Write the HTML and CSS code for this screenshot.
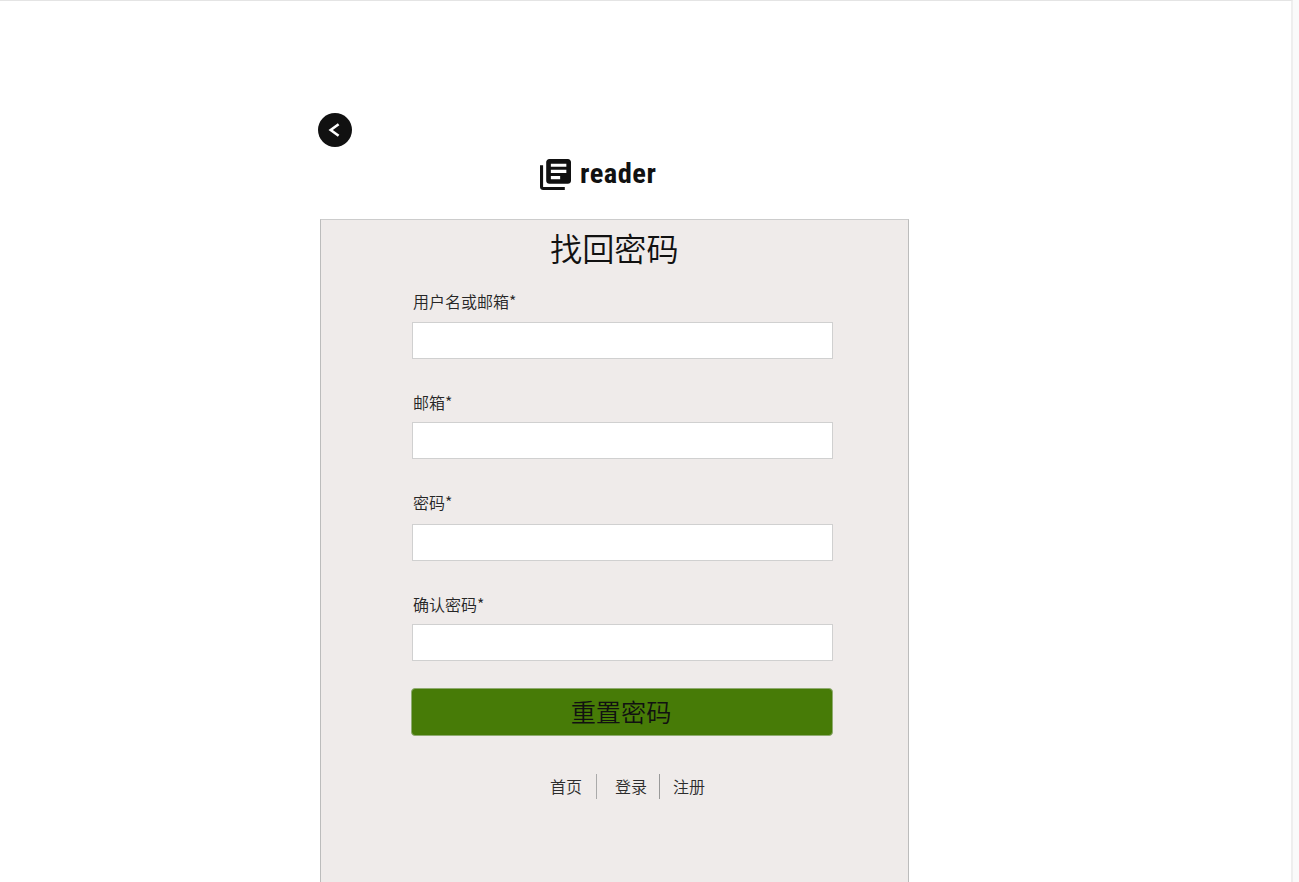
FILE: index.html
```html
<!DOCTYPE html>
<html lang="zh-CN">
<head>
<meta charset="utf-8">
<title>找回密码</title>
<link rel="stylesheet" href="styles.css">
</head>
<body>
<div class="page">
  <main class="content">
    <a class="back" href="#" aria-label="返回">
      <svg width="34" height="34" viewBox="0 0 34 34"><circle cx="17" cy="17" r="17" fill="#111"/><path d="M20.6 11.2 12.7 17l7.9 5.8" fill="none" stroke="#fff" stroke-width="2.6"/></svg>
    </a>
    <div class="brand">
      <svg width="31" height="31" viewBox="2 2 20 20" fill="#111"><path d="M4 6H2v14c0 1.1.9 2 2 2h14v-2H4V6zm16-4H8c-1.1 0-2 .9-2 2v12c0 1.1.9 2 2 2h12c1.1 0 2-.9 2-2V4c0-1.1-.9-2-2-2zm-1 9H9V9h10v2zm-4 4H9v-2h6v2zm4-8H9V5h10v2z"/></svg>
      <span class="brand-name">reader</span>
    </div>
    <form class="card">
      <h1 class="title">找回密码</h1>
      <div class="field field-account"><label class="label" for="account">用户名或邮箱*</label><input class="input" id="account"></div>
      <div class="field"><label class="label" for="email">邮箱*</label><input class="input" id="email"></div>
      <div class="field field-password"><label class="label" for="password">密码*</label><input class="input" id="password" type="password"></div>
      <div class="field"><label class="label" for="confirm">确认密码*</label><input class="input" id="confirm" type="password"></div>
      <button class="submit" type="button">重置密码</button>
      <nav class="links">
        <a class="link link-home" href="#">首页</a>
        <a class="link link-login" href="#">登录</a>
        <a class="link" href="#">注册</a>
      </nav>
    </form>
  </main>
</div>
</body>
</html>
```
FILE: styles.css
```css
* { box-sizing: border-box; }
html, body { margin: 0; height: 100%; overflow: hidden; }
body {
  background: #fafafa;
  color: #111;
  font-family: "Noto Sans CJK SC", sans-serif;
  font-weight: 350;
}
.page {
  width: 1293px;
  height: 882px;
  overflow: hidden;
  background: #fff;
  border-top: 1px solid #e4e4e4;
  border-right: 2px solid #eee;
}
.content { width: 591px; margin-left: 318px; padding-top: 111.5px; }
.back { display: block; width: 34px; height: 34px; }
.back svg, .brand svg { display: block; }
.brand { display: flex; align-items: center; height: 31px; margin: 12px 0 0 222px; gap: 9px; }
.brand-name {
  padding-bottom: 1px;
  font: 700 28.5px/30px Roboto, sans-serif;
  font-stretch: 87%;
  letter-spacing: 0.5px;
}
.card {
  width: 589px;
  height: 700px;
  margin: 29.5px 0 0 2px;
  padding: 2px 76px 0 91px;
  background: #efebea;
  border: 1px solid #bcbcbc;
  border-top-color: #ccc;
}
.title { margin: 0 0 23px; height: 50px; padding-left: 138px; font-size: 32.2px; line-height: 50px; font-weight: 350; white-space: nowrap; }
.field { display: flex; flex-direction: column; width: 421px; height: 100px; }
.field-account { height: 101px; }
.field-password { height: 102px; }
.label { height: 26px; padding-left: 1px; color: #262626; font-size: 16px; line-height: 12px; }
.field-account .label { height: 27px; }
.field-password .label { height: 28px; }
.input { width: 421px; height: 37px; border: 1px solid #d0d0d0; background: #fff; padding: 0 8px; }
.submit {
  display: block;
  width: 422px;
  height: 48px;
  margin: -10px 0 0 -1px;
  padding: 0 2px 2px 0;
  background: #477b07;
  border: 1px solid #8fab70;
  border-radius: 4px;
  color: #111;
  font: 350 25.2px/44px "Noto Sans CJK SC", sans-serif;
}
.links { display: flex; height: 25px; margin: 38px 0 0 138px; font-size: 16px; line-height: 25px; }
.link { color: #2c2c2c; text-decoration: none; }
.link-home { width: 47px; margin-right: 18px; border-right: 1px solid #aaa; }
.link-login { width: 45px; margin-right: 13px; border-right: 1px solid #999; }
```
